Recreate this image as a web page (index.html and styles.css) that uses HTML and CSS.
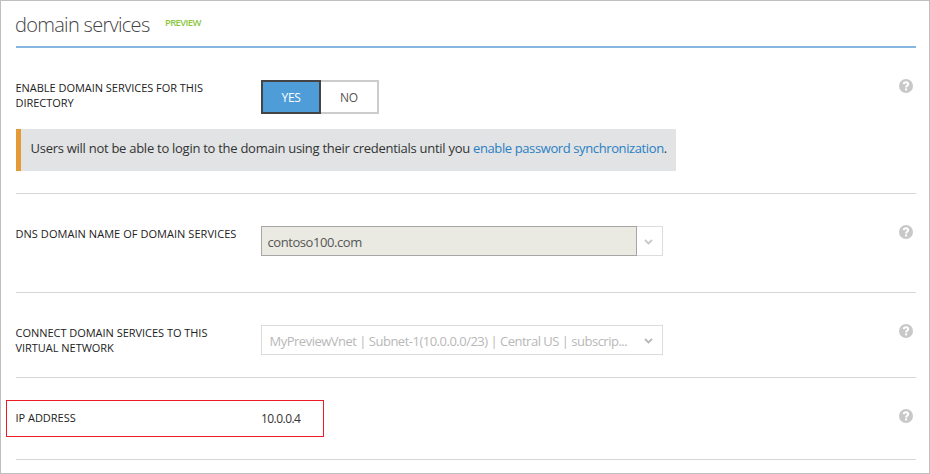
FILE: index.html
```html
<!DOCTYPE html>
<html lang="en">
<head>
<meta charset="utf-8">
<title>Domain services</title>
<link rel="stylesheet" href="styles.css">
</head>
<body>
<svg class="defs" width="0" height="0" aria-hidden="true">
  <symbol id="help" viewBox="0 0 14 14">
    <circle cx="7" cy="7" r="7" fill="#c8c8c8"/>
    <path d="M4.7 5.1C4.8 3.7 5.8 3.2 7 3.2c1.3 0 2.2.7 2.2 1.9C9.2 6.7 7.1 6.6 7.1 8.4" fill="none" stroke="#fff" stroke-width="2"/>
    <rect x="6" y="9.4" width="2.1" height="2" fill="#fff"/>
  </symbol>
  <symbol id="chevron" viewBox="0 0 9 6">
    <path d="M1 1l3.5 3.4L8 1" fill="none" stroke="currentColor" stroke-width="1.8"/>
  </symbol>
</svg>
<main class="frame">
  <header class="header">
    <h1 class="title">domain services</h1>
    <span class="preview">PREVIEW</span>
  </header>

  <section class="row row-enable">
    <div class="label">ENABLE DOMAIN SERVICES FOR THIS<br>DIRECTORY</div>
    <div class="toggle">
      <button class="option selected">YES</button><button class="option">NO</button>
    </div>
    <svg class="help"><use href="#help"/></svg>
    <p class="notice">Users will not be able to login to the domain using their credentials until you <a class="link">enable password synchronization</a>.</p>
  </section>

  <section class="row row-dns">
    <div class="label label-dns">DNS DOMAIN NAME OF DOMAIN SERVICES</div>
    <div class="combo">
      <div class="combo-value">contoso100.com</div>
      <div class="combo-arrow"><svg class="chevron"><use href="#chevron"/></svg></div>
    </div>
    <svg class="help"><use href="#help"/></svg>
  </section>

  <section class="row row-network">
    <div class="label">CONNECT DOMAIN SERVICES TO THIS<br>VIRTUAL NETWORK</div>
    <div class="select"><span class="select-text">MyPreviewVnet | Subnet-1(10.0.0.0/23) | Central US | subscrip...</span><svg class="chevron"><use href="#chevron"/></svg></div>
    <svg class="help"><use href="#help"/></svg>
  </section>

  <section class="row row-ip">
    <div class="label">IP ADDRESS</div>
    <div class="ip">10.0.0.4</div>
    <svg class="help"><use href="#help"/></svg>
    <div class="highlight"></div>
  </section>
</main>
</body>
</html>
```
FILE: styles.css
```css
* { box-sizing: border-box; }
body {
  margin: 0;
  background: #fff;
  color: #333;
  font-family: "Open Sans", "Noto Sans", sans-serif;
}
.defs { position: absolute; }
.frame {
  height: 474px;
  padding: 0 13px 0 15px;
  border: 1px solid #bfbfbf;
}
.header {
  display: flex;
  height: 47px;
  border-bottom: 2px solid #86b7e0;
}
.title {
  width: 149px;
  margin: 10px 0 0 -1px;
  font-size: 20px;
  line-height: 28px;
  font-weight: 300;
  letter-spacing: -0.7px;
  white-space: nowrap;
  color: #444;
}
.preview {
  margin: 16px 0 0 1px;
  font-size: 9.5px;
  line-height: 12px;
  font-weight: 600;
  letter-spacing: -0.65px;
  color: #8cc63f;
}
.row {
  position: relative;
  display: grid;
  grid-template-columns: 245px 1fr 14px;
  align-content: start;
  padding: 32px 3px 0 0;
  border-bottom: 1px solid #d6d6d6;
}
.row-enable { height: 146px; }
.row-dns { height: 99px; }
.row-network { height: 85px; }
.row-ip { height: 82px; }
.label {
  margin-left: -0.5px;
  font-size: 11px;
  line-height: 15px;
  letter-spacing: -0.03px;
  white-space: nowrap;
  color: #222;
}
.label-dns { letter-spacing: 0.05px; }
.help {
  width: 14px;
  height: 14px;
  margin-top: -1px;
}
.toggle { display: flex; height: 34px; }
.option {
  width: 58px;
  padding: 1px 0 0;
  border: 2px solid #ccc;
  border-left: 0;
  background: #fff;
  color: #555;
  font: 12px/29px "Open Sans", sans-serif;
  letter-spacing: -0.3px;
}
.option.selected {
  width: 60px;
  border: 2px solid #444;
  background: #4f9dd8;
  color: #fff;
}
.notice {
  grid-column: 1 / -1;
  width: 660px;
  height: 42px;
  margin: 15px 0 0;
  padding-left: 9.5px;
  border-left: 5px solid #e39a37;
  background: #e1e3e5;
  font-size: 13px;
  line-height: 39px;
  letter-spacing: -0.27px;
  white-space: nowrap;
  color: #333;
}
.link { color: #2a80c3; letter-spacing: -0.39px; }
.combo { display: flex; width: 402px; height: 30px; }
.combo-value {
  width: 376px;
  padding-left: 5.5px;
  border: 1px solid #a6a6a6;
  background: #eaeae2;
  color: #555;
  font-size: 13px;
  line-height: 30px;
  letter-spacing: -0.43px;
}
.combo-arrow {
  display: flex;
  align-items: center;
  justify-content: center;
  width: 26px;
  padding: 2px 2px 0 0;
  border: 1px solid #dcdcdc;
  border-left: 0;
  color: #c8c8c8;
}
.chevron { width: 9px; height: 6px; flex: none; }
.select {
  display: flex;
  align-items: center;
  justify-content: space-between;
  width: 402px;
  height: 30px;
  padding: 1px 9px 0 7.5px;
  border: 1px solid #dcdcdc;
  color: #b8b8b8;
}
.select-text { font-size: 13px; letter-spacing: -0.5px; white-space: nowrap; }
.ip { font-size: 12px; line-height: 18px; letter-spacing: -0.55px; }
.highlight {
  position: absolute;
  left: -10px;
  top: 22px;
  width: 318px;
  height: 37px;
  border: 1px solid #ed1c24;
}
```
